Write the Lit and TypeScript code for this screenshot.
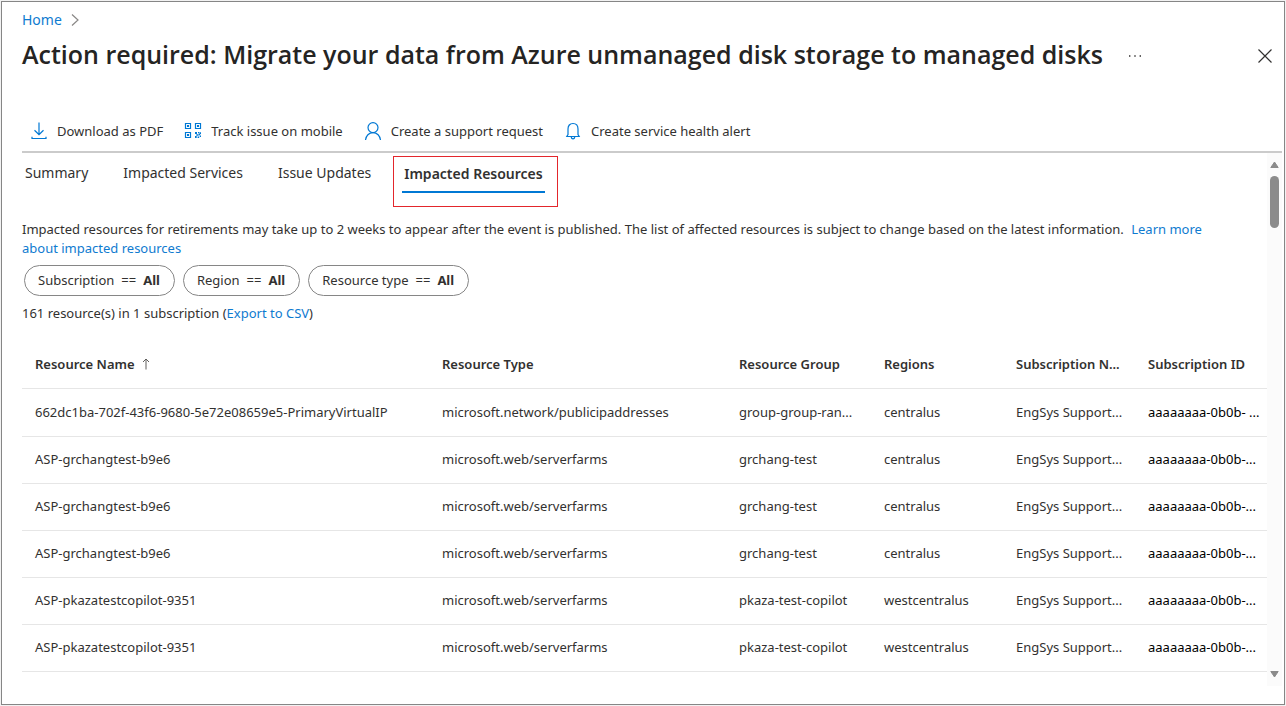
import { LitElement, html, css, svg } from "lit";
import { customElement } from "lit/decorators.js";

interface Resource {
  name: string;
  type: string;
  group: string;
  region: string;
  subscription: string;
  id: string;
}

const farm = (name: string, group: string, region: string): Resource => ({
  name,
  type: "microsoft.web/serverfarms",
  group,
  region,
  subscription: "EngSys Support...",
  id: "aaaaaaaa-0b0b-...",
});

const RESOURCES: Resource[] = [
  {
    name: "662dc1ba-702f-43f6-9680-5e72e08659e5-PrimaryVirtualIP",
    type: "microsoft.network/publicipaddresses",
    group: "group-group-ran...",
    region: "centralus",
    subscription: "EngSys Support...",
    id: "aaaaaaaa-0b0b- ...",
  },
  farm("ASP-grchangtest-b9e6", "grchang-test", "centralus"),
  farm("ASP-grchangtest-b9e6", "grchang-test", "centralus"),
  farm("ASP-grchangtest-b9e6", "grchang-test", "centralus"),
  farm("ASP-pkazatestcopilot-9351", "pkaza-test-copilot", "westcentralus"),
  farm("ASP-pkazatestcopilot-9351", "pkaza-test-copilot", "westcentralus"),
];

const FILTERS = ["Subscription", "Region", "Resource type"];

const icons = {
  download: svg`<path d="M9 .5v12M4.500 8.200L9 12.600l4.500-4.400M2 14.800v1.700h14v-1.700"/>`,
  qr: svg`<path d="M1.500 1.500h5v5h-5zM11.500 1.500h5v5h-5zM1.500 10.500h5v5h-5z"/>
    <path class="solid" d="M3 3h2v2H3zM13 3h2v2h-2zM3 12h2v2H3zM11 10h2v2h-2zM14 10h1.500v1.300H14zM16 10.300h1v1.700h-1zM12.300 12.300h2.200v1.500h-2.200zM14.800 11.500h1.400v1.800h-1.400zM11 14h1.700v2H11zM13.600 14.500h1.600V16h-1.600zM15.800 13.400H17V15h-1.200z"/>`,
  person: svg`<circle cx="9" cy="5.600" r="5"/><path d="M1.500 18c.4-4.200 3.500-7.400 7.500-7.400s7.100 3.200 7.500 7.400"/>`,
  bell: svg`<path d="M4 12.500V7c0-3.400 2-5.500 5-5.500s5 2.100 5 5.500v5.500l1.200 2H2.800zM7.200 14.800c.2 1.400.9 2 1.800 2s1.600-.6 1.800-2"/>`,
};

@customElement("app-root")
export class AppRoot extends LitElement {
  static styles = css`
    :host {
      display: block;
      font-family: "Noto Sans", "Open Sans", sans-serif;
      font-size: 13px;
      line-height: 19px;
      color: #323130;
      background: #f2f2f2;
    }
    * { box-sizing: border-box; }
    a { color: #0f7bd0; text-decoration: none; }
    button {
      font: inherit;
      color: inherit;
      background: none;
      border: 0;
      padding: 0;
      margin: 0;
      cursor: pointer;
    }
    svg { display: block; fill: none; stroke: #0078d4; stroke-width: 1.2; }
    .solid { fill: #0078d4; stroke: none; }
    .frame {
      display: flex;
      flex-direction: column;
      min-height: 100vh;
      border: 1px solid #f2f2f2;
    }
    .blade {
      flex: 1;
      display: flex;
      flex-direction: column;
      border: 1px solid #868686;
      background: #fff;
      padding: 8px 2px 18px 20px;
    }
    .crumbs { display: flex; align-items: center; gap: 9px; font-size: 14px; line-height: 20px; }
    .grey { stroke: #8a8886; }
    .title-row { display: flex; align-items: center; padding: 3px 10px 0 0; }
    h1 {
      margin: 0;
      font-family: "Open Sans", "Noto Sans", sans-serif;
      font-size: 25px;
      line-height: 42px;
      font-weight: 600;
      color: #252423;
      white-space: nowrap;
    }
    .more, .close { padding-top: 4px; }
    .more { margin-left: 25px; }
    .more .solid { fill: #323130; }
    .close { margin-left: auto; }
    .close svg { stroke: #323130; }
    .toolbar {
      display: flex;
      gap: 21px;
      padding: 45px 8px 9px;
      border-bottom: 2px solid #cbcbcb;
    }
    .toolbar button { display: flex; align-items: center; gap: 9px; line-height: 22px; white-space: nowrap; }
    .body { flex: 1; display: flex; }
    .content { flex: 1; min-width: 0; }
    .tabs { display: flex; align-items: flex-start; font-size: 14px; line-height: 20px; padding: 3px 3px 0; }
    .tab { margin: 7px 35px 0 0; white-space: nowrap; }
    .marked { border: 1px solid #e3262c; padding: 7px 12px 13px 8px; margin-left: -13px; }
    .selected { font-weight: 600; padding: 0 2px 7px; border-bottom: 2px solid #0078d4; white-space: nowrap; display: block; }
    .note { margin: 13px 26px 0 0; }
    .note a { margin-left: 4px; }
    .filters { display: flex; gap: 8px; padding: 7px 2px; }
    .pill {
      display: flex;
      gap: 7px;
      border: 1px solid #868686;
      border-radius: 16px;
      padding: 0 14px 0 13px;
      line-height: 29px;
      white-space: nowrap;
    }
    .pill b { font-weight: 700; }
    .count { margin: 1px 0 17px; }
    table { width: 100%; border-collapse: collapse; table-layout: fixed; }
    th, td { text-align: left; padding: 0 0 0 13px; white-space: nowrap; border-bottom: 1px solid #e6e6e6; }
    th { height: 48px; padding-top: 1px; font-weight: 600; }
    td { height: 47px; }
    tr:first-child td { height: 48px; }
    .wide { width: 297px; }
    .mid { width: 145px; }
    .slim { width: 132px; }
    .id { color: #000; }
    .sort { display: flex; align-items: center; gap: 7px; font-weight: 600; }
    .sort svg { stroke: #605e5c; stroke-width: 1; }
    .scrollbar {
      width: 15px;
      background: #fbfbfb;
      display: flex;
      flex-direction: column;
      align-items: center;
      padding: 8px 0;
    }
    .scrollbar svg { fill: #8b8b8b; stroke: #8b8b8b; stroke-width: 1; stroke-linejoin: round; }
    .thumb { width: 9px; height: 52px; border-radius: 5px; background: #8b8b8b; margin: 7px 0 auto; }
  `;

  private icon(shape: unknown) {
    return html`<svg width="18" height="18" viewBox="0 0 18 18" aria-hidden="true">${shape}</svg>`;
  }

  render() {
    return html`
      <div class="frame"><main class="blade">
        <nav class="crumbs" aria-label="Breadcrumb">
          <a href="#home">Home</a>
          <svg class="grey" width="8" height="12" viewBox="0 0 8 12"><path d="M1 .5l6 5.500-6 5.500"/></svg>
        </nav>
        <header class="title-row">
          <h1>Action required: Migrate your data from Azure unmanaged disk storage to managed disks</h1>
          <button class="more" aria-label="More">
            <svg width="14" height="4" viewBox="0 0 14 4"><path class="solid" d="M1 1.300h1.400v1.400H1zM6.300 1.300h1.400v1.400H6.300zM11.600 1.300H13v1.400h-1.400z"/></svg>
          </button>
          <button class="close" aria-label="Close">
            <svg width="14" height="14" viewBox="0 0 14 14"><path d="M.5.5l13 13M13.500.5l-13 13"/></svg>
          </button>
        </header>
        <div class="toolbar">
          <button>${this.icon(icons.download)}Download as PDF</button>
          <button>${this.icon(icons.qr)}Track issue on mobile</button>
          <button>${this.icon(icons.person)}Create a support request</button>
          <button>${this.icon(icons.bell)}Create service health alert</button>
        </div>
        <div class="body">
          <section class="content">
            <div class="tabs">
              <button class="tab">Summary</button>
              <button class="tab">Impacted Services</button>
              <button class="tab">Issue Updates</button>
              <div class="marked"><button class="selected">Impacted Resources</button></div>
            </div>
            <p class="note">Impacted resources for retirements may take up to 2 weeks to appear after the event is published. The list of affected resources is subject to change based on the latest information. <a href="#learn">Learn more about impacted resources</a></p>
            <div class="filters">
              ${FILTERS.map((f) => html`<button class="pill"><span>${f}</span><span>==</span><b>All</b></button>`)}
            </div>
            <p class="count">161 resource(s) in 1 subscription (<a href="#export">Export to CSV</a>)</p>
            <table>
              <thead>
                <tr>
                  <th><button class="sort">Resource Name
                    <svg width="8" height="12" viewBox="0 0 8 12"><path d="M4 11.500V1M1 4l3-3 3 3"/></svg></button></th>
                  <th class="wide">Resource Type</th>
                  <th class="mid">Resource Group</th>
                  <th class="slim">Regions</th>
                  <th class="slim">Subscription N...</th>
                  <th class="slim">Subscription ID</th>
                </tr>
              </thead>
              <tbody>
                ${RESOURCES.map(
                  (r) => html`<tr>
                    <td>${r.name}</td>
                    <td>${r.type}</td>
                    <td>${r.group}</td>
                    <td>${r.region}</td>
                    <td>${r.subscription}</td>
                    <td class="id">${r.id}</td>
                  </tr>`
                )}
              </tbody>
            </table>
          </section>
          <div class="scrollbar" aria-hidden="true">
            <svg width="9" height="8" viewBox="0 0 9 8"><path d="M4.500 1L8.200 6.500H.8z"/></svg>
            <div class="thumb"></div>
            <svg width="9" height="8" viewBox="0 0 9 8"><path d="M4.500 7L.8 1.500h7.400z"/></svg>
          </div>
        </div>
      </main></div>
    `;
  }
}
